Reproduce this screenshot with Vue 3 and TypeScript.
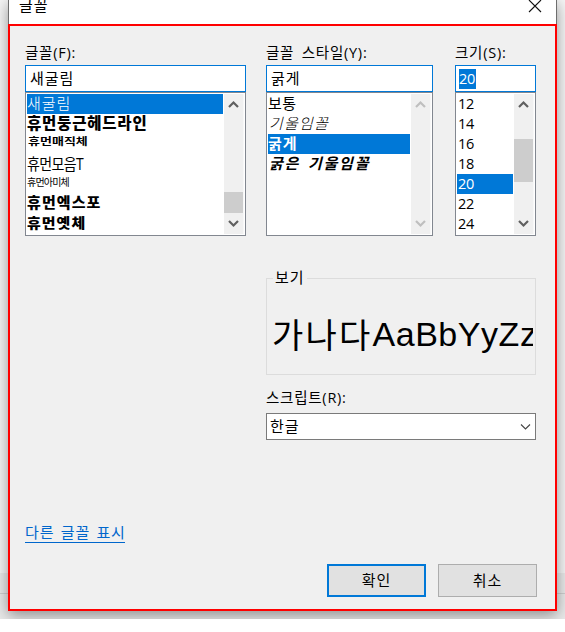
<script setup lang="ts">
import { ref } from 'vue'

interface FontItem {
  name: string
  face: string
}

const fonts: FontItem[] = [
  { name: '새굴림', face: 'gulim' },
  { name: '휴먼둥근헤드라인', face: 'headline' },
  { name: '휴먼매직체', face: 'magic' },
  { name: '휴먼모음T', face: 'moeum' },
  { name: '휴먼아미체', face: 'ami' },
  { name: '휴먼엑스포', face: 'expo' },
  { name: '휴먼옛체', face: 'old' },
]
const styles: FontItem[] = [
  { name: '보통', face: 'normal' },
  { name: '기울임꼴', face: 'italic' },
  { name: '굵게', face: 'bold' },
  { name: '굵은 기울임꼴', face: 'bold-italic' },
]
const sizes: string[] = ['12', '14', '16', '18', '20', '22', '24']

const font = ref('새굴림')
const fontStyle = ref('굵게')
const size = ref('20')
</script>

<template>
  <div class="page">
    <div class="backdrop">
      <div class="dialog">
        <header class="titlebar">
          <span class="title">글꼴</span>
          <svg class="close" width="14" height="14" viewBox="0 0 14 14">
            <path d="M1 1L13 13M13 1L1 13" />
          </svg>
        </header>
        <main class="body">
          <div class="pickers">
            <section class="picker">
              <label class="label">글꼴(F):</label>
              <div class="field">{{ font }}</div>
              <div class="list">
                <ul class="items">
                  <li
                    v-for="f in fonts"
                    :key="f.name"
                    :class="{ selected: f.name === font }"
                    @click="font = f.name"
                  >
                    <span :class="f.face">{{ f.name }}</span>
                  </li>
                </ul>
                <div class="scroll">
                  <svg width="19" height="20" viewBox="0 0 19 20"><path d="M5 13L9.5 8.5L14 13" /></svg>
                  <i class="thumb low"></i>
                  <svg width="19" height="20" viewBox="0 0 19 20"><path d="M5 7L9.5 11.5L14 7" /></svg>
                </div>
              </div>
            </section>

            <section class="picker">
              <label class="label">글꼴 스타일(Y):</label>
              <div class="field">{{ fontStyle }}</div>
              <div class="list">
                <ul class="items">
                  <li
                    v-for="s in styles"
                    :key="s.name"
                    :class="{ selected: s.name === fontStyle }"
                    @click="fontStyle = s.name"
                  >
                    <span :class="s.face">{{ s.name }}</span>
                  </li>
                </ul>
                <div class="scroll disabled">
                  <svg width="19" height="20" viewBox="0 0 19 20"><path d="M5 13L9.5 8.5L14 13" /></svg>
                  <svg width="19" height="20" viewBox="0 0 19 20"><path d="M5 7L9.5 11.5L14 7" /></svg>
                </div>
              </div>
            </section>

            <section class="picker">
              <label class="label">크기(S):</label>
              <div class="field size-field"><span class="marked">{{ size }}</span></div>
              <div class="list">
                <ul class="items">
                  <li
                    v-for="n in sizes"
                    :key="n"
                    :class="{ selected: n === size }"
                    @click="size = n"
                  >
                    <span class="number">{{ n }}</span>
                  </li>
                </ul>
                <div class="scroll">
                  <svg width="19" height="20" viewBox="0 0 19 20"><path d="M5 13L9.5 8.5L14 13" /></svg>
                  <i class="thumb mid"></i>
                  <svg width="19" height="20" viewBox="0 0 19 20"><path d="M5 7L9.5 11.5L14 7" /></svg>
                </div>
              </div>
            </section>
          </div>

          <div class="lower">
            <div class="preview">
              <span class="legend">보기</span>
              <div class="sample"><span class="ko">가나다</span><span class="latin">AaBbYyZz</span></div>
            </div>
            <label class="label script-label">스크립트(R):</label>
            <div class="combo">
              <span class="value">한글</span>
              <svg width="11" height="8" viewBox="0 0 11 8"><path d="M1 1.5L5.5 6L10 1.5" /></svg>
            </div>
          </div>

          <a class="more">다른 글꼴 표시</a>

          <footer class="actions">
            <button class="primary">확인</button>
            <button>취소</button>
          </footer>
        </main>
      </div>
    </div>
  </div>
</template>

<style>
body {
  background: #fff;
}
</style>

<style scoped>
* {
  box-sizing: border-box;
}
.page {
  width: 565px;
  height: 632px;
  overflow: hidden;
  background: #fff;
  color: #000;
  font-family: 'Open Sans', 'Noto Sans CJK KR', sans-serif;
  font-size: 15px;
}
.backdrop {
  height: 619px;
  padding-left: 8px;
  overflow: hidden;
  background: linear-gradient(#f5f5f5 573px, #e9e9e9 573px, #e9e9e9 593px, #cfcfcf 593px, #cfcfcf 594px, #e9e9e9 594px);
}
.dialog {
  width: 549px;
  height: 611px;
  box-shadow: 0 4px 14px rgba(0, 0, 0, 0.4);
}
.titlebar {
  display: flex;
  justify-content: space-between;
  height: 24px;
  padding: 0 14px 0 10px;
  background: #fff;
  border: solid #6e6e6e;
  border-width: 0 1px;
}
.title {
  height: 20px;
  line-height: 20px;
  margin-top: -5px;
  letter-spacing: 0.9px;
}
.close {
  margin-top: -1px;
  fill: none;
  stroke: #111;
  stroke-width: 1.1;
}
.body {
  height: 587px;
  padding: 17px 18px 0 15px;
  background: #f0f0f0;
  border: 2px solid #f00;
}
.pickers {
  display: grid;
  grid-template-columns: 221px 167px 81px;
  column-gap: 20px;
}
.picker:last-child {
  margin-left: 2px;
  width: 81px;
}
.label {
  display: block;
  height: 22px;
  line-height: 20px;
  font-size: 14.5px;
  letter-spacing: 0.75px;
  word-spacing: 3px;
  white-space: nowrap;
}
.field {
  height: 27px;
  padding-left: 4px;
  line-height: 24px;
  letter-spacing: 0.9px;
  background: #fff;
  border: 1px solid #0078d7;
}
.size-field {
  padding: 3px 0 0 3px;
}
.marked {
  display: block;
  width: 17px;
  height: 20px;
  line-height: 20px;
  font-size: 14.5px;
  letter-spacing: -0.2px;
  color: #fff;
  background: #0078d7;
}
.list {
  display: flex;
  height: 144px;
  padding: 1px;
  background: #fff;
  border: 1px solid #828790;
}
.items {
  flex: 1;
  min-width: 0;
  margin: 0 1px 0 0;
  padding: 0;
  list-style: none;
}
.items li {
  height: 20px;
  line-height: 19px;
  white-space: nowrap;
}
.items li span {
  display: block;
  transform-origin: left center;
}
.items .selected {
  color: #fff;
  background: #0078d7;
}
.items .gulim {
  font-weight: 300;
  letter-spacing: 0.9px;
}
.items .headline {
  font-weight: 900;
  font-size: 15.5px;
  letter-spacing: 0.8px;
}
.items .magic {
  padding-left: 1px;
  font-weight: 700;
  font-size: 13px;
  transform: translateY(-2px) scaleY(0.8);
}
.items .moeum {
  font-size: 14px;
  letter-spacing: -0.6px;
  transform: scaleY(1.1);
}
.items .ami {
  font-size: 10px;
  letter-spacing: -0.8px;
  transform: translateY(-1px);
}
.items .expo {
  font-weight: 900;
  font-size: 15px;
  letter-spacing: 1.1px;
  transform: translateY(-1px) scaleY(0.95);
}
.items .old {
  font-weight: 900;
  font-size: 15px;
  letter-spacing: 1px;
  transform: scaleY(0.88);
}
.items .normal {
  letter-spacing: 0.5px;
}
.items .italic {
  padding-left: 1px;
  font-style: italic;
  font-weight: 300;
  letter-spacing: 1.2px;
}
.items .bold {
  font-weight: 700;
  letter-spacing: 1px;
}
.items .bold-italic {
  padding-left: 1px;
  font-style: italic;
  font-weight: 700;
  letter-spacing: 1.8px;
  word-spacing: 2px;
}
.items .number {
  padding-left: 1px;
  line-height: 20px;
  font-size: 14.5px;
  letter-spacing: -0.3px;
}
.scroll {
  display: flex;
  flex-direction: column;
  justify-content: space-between;
  width: 20px;
  background: #f0f0f0;
  border-right: 1px solid #f8f8f8;
}
.scroll svg {
  flex: none;
  fill: none;
  stroke: #606060;
  stroke-width: 2.2;
}
.scroll.disabled svg {
  stroke: #bfbfbf;
}
.thumb {
  width: 19px;
  background: #cdcdcd;
}
.low {
  height: 21px;
  margin: auto 0 1px;
}
.mid {
  height: 43px;
  margin: 25px 0 auto;
}
.lower {
  width: 270px;
  margin: 42px 0 0 241px;
}
.preview {
  height: 97px;
  border: 1px solid #dcdcdc;
}
.legend {
  display: block;
  width: 34px;
  height: 20px;
  margin: -11px 0 0 6px;
  padding-left: 2px;
  line-height: 18px;
  letter-spacing: 0.9px;
  background: #f0f0f0;
}
.sample {
  display: flex;
  height: 60px;
  margin: 16px 2px 0 5px;
  line-height: 60px;
  white-space: nowrap;
  overflow: hidden;
}
.ko {
  font-family: 'Noto Sans CJK KR', sans-serif;
  font-size: 34px;
  letter-spacing: 2.2px;
}
.latin {
  font-family: 'Liberation Sans', sans-serif;
  font-size: 34px;
  letter-spacing: 0.55px;
}
.script-label {
  margin-top: 13px;
  height: 25px;
}
.combo {
  display: flex;
  align-items: center;
  justify-content: space-between;
  height: 27px;
  padding: 0 4px 0 3px;
  background: #fff;
  border: 1px solid #7a7a7a;
}
.value {
  height: 24px;
  line-height: 22px;
  letter-spacing: 0.9px;
}
.combo svg {
  fill: none;
  stroke: #444;
  stroke-width: 1.1;
}
.more {
  display: block;
  width: 100px;
  height: 20px;
  margin-top: 83px;
  line-height: 19px;
  letter-spacing: 0.9px;
  word-spacing: 1.5px;
  color: #0066cc;
  white-space: nowrap;
  border-bottom: 1px solid #0066cc;
}
.actions {
  display: flex;
  justify-content: flex-end;
  gap: 12px;
  margin-top: 21px;
}
.actions button {
  width: 99px;
  height: 33px;
  padding: 0 0 2px;
  font: inherit;
  letter-spacing: 0.9px;
  color: #000;
  background: #e1e1e1;
  border: 1px solid #adadad;
}
.actions .primary {
  border: 2px solid #0078d7;
}
</style>
